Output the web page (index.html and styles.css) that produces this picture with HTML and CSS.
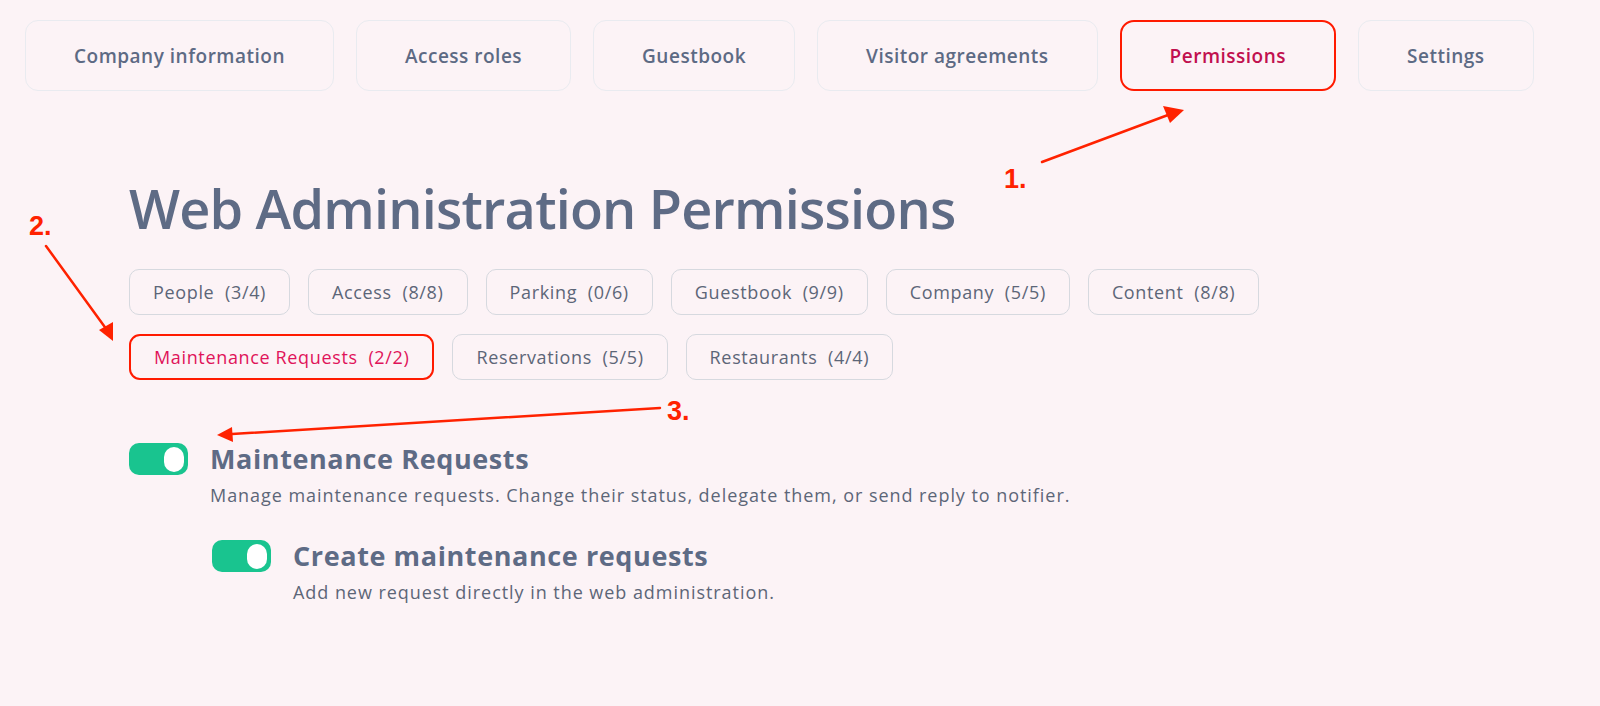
FILE: index.html
```html
<!DOCTYPE html>
<html lang="en">
<head>
<meta charset="utf-8">
<title>Web Administration Permissions</title>
<link rel="stylesheet" href="styles.css">
</head>
<body>
<nav class="tabs">
  <a class="tab">Company information</a>
  <a class="tab">Access roles</a>
  <a class="tab">Guestbook</a>
  <a class="tab">Visitor agreements</a>
  <a class="tab tab-active">Permissions</a>
  <a class="tab">Settings</a>
</nav>
<main class="content">
  <h1 class="title">Web Administration Permissions</h1>
  <div class="chips">
    <span class="chip">People&nbsp; (3/4)</span>
    <span class="chip">Access&nbsp; (8/8)</span>
    <span class="chip">Parking&nbsp; (0/6)</span>
    <span class="chip">Guestbook&nbsp; (9/9)</span>
    <span class="chip">Company&nbsp; (5/5)</span>
    <span class="chip">Content&nbsp; (8/8)</span>
    <span class="chip chip-active">Maintenance Requests&nbsp; (2/2)</span>
    <span class="chip">Reservations&nbsp; (5/5)</span>
    <span class="chip">Restaurants&nbsp; (4/4)</span>
  </div>
  <section class="perm">
    <span class="toggle"><span class="knob"></span></span>
    <div class="perm-text">
      <h2 class="perm-title">Maintenance Requests</h2>
      <p class="perm-desc">Manage maintenance requests. Change their status, delegate them, or send reply to notifier.</p>
    </div>
  </section>
  <section class="perm perm-sub">
    <span class="toggle"><span class="knob"></span></span>
    <div class="perm-text">
      <h2 class="perm-title">Create maintenance requests</h2>
      <p class="perm-desc">Add new request directly in the web administration.</p>
    </div>
  </section>
</main>
<svg class="annotations" width="1600" height="706" viewBox="0 0 1600 706">
  <g stroke="#ff2200" stroke-width="2.5" fill="none" stroke-linecap="round">
    <line x1="1042" y1="162" x2="1168" y2="115"/>
    <line x1="46" y1="246" x2="107" y2="330"/>
    <line x1="660" y1="408" x2="232" y2="434"/>
  </g>
  <g fill="#ff2200">
    <polygon points="1184,110 1163,106 1170,123"/>
    <polygon points="113,341 99,330 113,322"/>
    <polygon points="217,435 232,427 233,442"/>
  </g>
  <g class="anno-num">
    <text x="1004" y="188">1.</text>
    <text x="29" y="235">2.</text>
    <text x="667" y="420">3.</text>
  </g>
</svg>
</body>
</html>
```
FILE: styles.css
```css
* { box-sizing: border-box; }
html, body { margin: 0; padding: 0; }
body {
  background: #fcf3f6;
  font-family: "Open Sans", "Noto Sans", sans-serif;
  color: #5d6a84;
  width: 1600px;
  height: 706px;
  overflow: hidden;
  position: relative;
}
.tabs {
  display: flex;
  gap: 22px;
  padding: 20px 25px 0;
}
.tab {
  height: 71px;
  display: flex;
  align-items: center;
  justify-content: center;
  padding: 0 48px;
  border: 1.5px solid #e9ebf0;
  border-radius: 13px;
  font-size: 19px;
  font-weight: 600;
  color: #5d6a84;
  letter-spacing: 0.5px;
}
.tab-active {
  border: 2px solid #ff1a00;
  color: #c1104f;
  border-radius: 14px;
}
.content {
  padding: 0 0 0 129px;
}
.title {
  margin: 84px 0 0;
  font-size: 54px;
  line-height: 66px;
  font-weight: 600;
  color: #5e6b85;
  letter-spacing: -0.8px;
}
.chips {
  display: flex;
  flex-wrap: wrap;
  gap: 19px 18px;
  max-width: 1200px;
  margin-top: 28px;
}
.chip {
  height: 46px;
  display: flex;
  align-items: center;
  padding: 0 23px;
  border: 1.5px solid #d6d9df;
  border-radius: 10px;
  font-size: 18px;
  letter-spacing: 0.65px;
  color: #5c6678;
}
.chip-active {
  border: 2px solid #ff1a00;
  color: #e0135a;
  border-radius: 11px;
}
.perm {
  display: flex;
  gap: 22px;
  margin-top: 63px;
}
.perm-sub {
  margin-top: 33px;
  padding-left: 83px;
}
.toggle {
  flex: none;
  width: 59px;
  height: 32px;
  border-radius: 10px;
  background: #19c48f;
  display: flex;
  justify-content: flex-end;
  align-items: center;
  padding-right: 4px;
}
.knob {
  width: 20px;
  height: 25px;
  border-radius: 10px;
  background: #ffffff;
}
.perm-title {
  margin: 0;
  font-size: 27px;
  line-height: 32px;
  font-weight: 700;
  letter-spacing: 0.6px;
  color: #5e6b85;
}
.perm-desc {
  margin: 8px 0 0;
  font-size: 18px;
  line-height: 24px;
  letter-spacing: 0.95px;
  color: #5c6678;
}
.annotations {
  position: absolute;
  left: 0;
  top: 0;
  pointer-events: none;
}
.anno-num text {
  font-family: "Liberation Sans", Arial, sans-serif;
  font-weight: 700;
  font-size: 27px;
  fill: #ff2200;
}
```
